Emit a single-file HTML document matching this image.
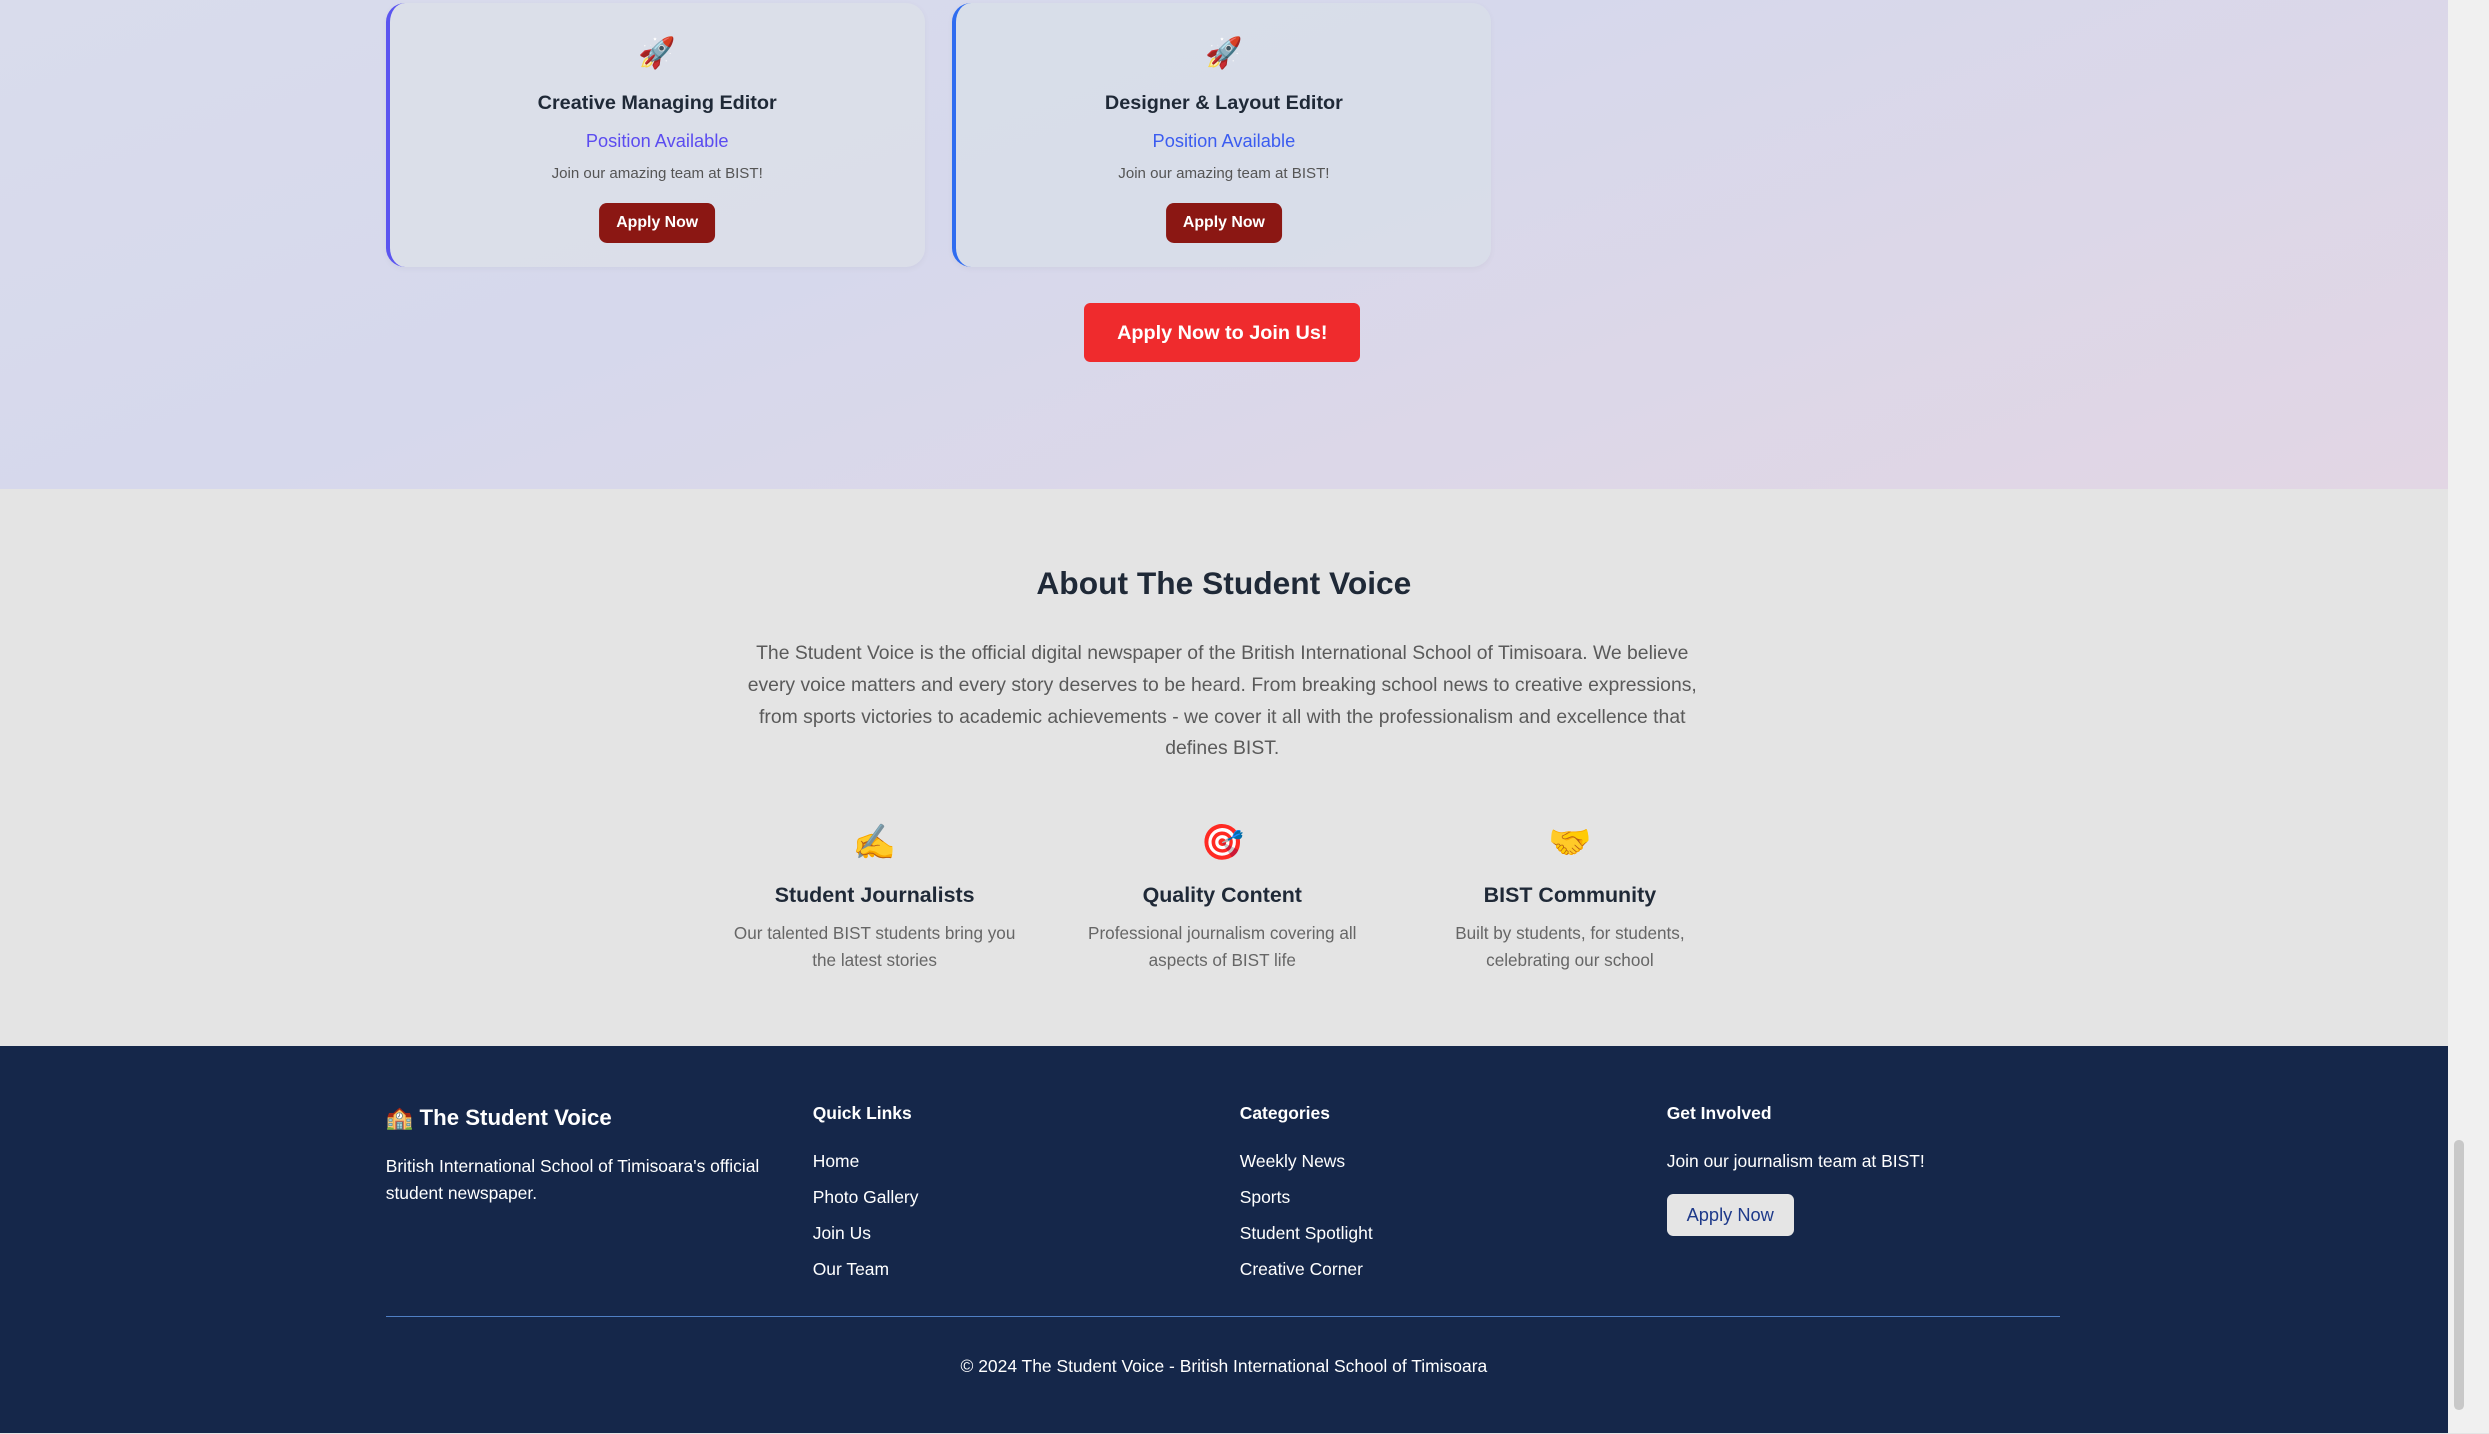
<!DOCTYPE html>
<html><head><meta charset="utf-8"><style>
html{zoom:1.58737;}
body{margin:0;width:1568px;height:903px;overflow:hidden;font-family:"Liberation Sans",sans-serif;position:relative;background:#e4e4e4;}
.main{position:absolute;left:0;top:0;width:1542px;height:903px;}
.top{position:absolute;left:0;top:0;width:1542px;height:308px;background:linear-gradient(160deg,#d9dcec 0%,#d6d8ec 40%,#e2d6e4 100%);}
.card{position:absolute;top:2px;width:337px;height:166px;background:rgba(220,224,232,.75);border-left:3px solid #5b55f0;border-radius:12px;text-align:center;box-shadow:0 1px 4px rgba(0,0,0,.04);}
.card .ic{position:absolute;top:20px;left:0;right:0;font-size:19px;line-height:24px;}
.card h3{position:absolute;top:56px;left:0;right:0;margin:0;font-size:12.5px;font-weight:bold;color:#1f2937;}
.card .pa{position:absolute;top:80px;left:0;right:0;font-size:11.5px;color:#5b4cf0;}
.card .j{position:absolute;top:102px;left:0;right:0;font-size:9.5px;color:#555;}
.card .b{position:absolute;top:126px;left:50%;transform:translateX(-50%);width:73px;height:25px;background:#8b1713;color:#fff;border-radius:5px;font-size:10px;font-weight:bold;line-height:25px;}
.big{position:absolute;left:683px;top:191px;width:174px;height:37px;background:#ef2b2d;color:#fff;border-radius:4px;font-size:12.5px;font-weight:bold;text-align:center;line-height:39px;}
h2{position:absolute;top:356px;left:0;width:1542px;text-align:center;margin:0;font-size:20px;color:#1f2937;font-weight:bold;}
.ab{position:absolute;top:402px;left:462px;width:616px;text-align:center;font-size:12.2px;line-height:20px;color:#5a5a5a;}
.f{position:absolute;top:516px;width:200px;text-align:center;}
.f .i{font-size:22px;line-height:30px;}
.f h4{margin:10px 0 8px;font-size:13.5px;color:#1f2937;}
.f p{margin:0;font-size:10.8px;line-height:17px;color:#666;}
.foot{position:absolute;left:0;top:659px;width:1542px;height:244px;background:#15274a;color:#fff;}
.foot .c{position:absolute;top:36px;font-size:11px;}
.foot h5{margin:0 0 12px;font-size:11px;font-weight:bold;}
.foot .l{line-height:22.7px;}
.scroll{position:absolute;left:1542px;top:0;width:26px;height:903px;background:#f0f0f0;}
</style></head><body>
<div class="main">
<div class="top">
<div class="card" style="left:243px"><div class="ic">🚀</div><h3>Creative Managing Editor</h3><div class="pa">Position Available</div><div class="j">Join our amazing team at BIST!</div><div class="b">Apply Now</div></div>
<div class="card" style="left:600px;border-left-color:#2f6cf0;background:rgba(216,222,232,.8)"><div class="ic">🚀</div><h3>Designer &amp; Layout Editor</h3><div class="pa" style="color:#3b5cf0">Position Available</div><div class="j">Join our amazing team at BIST!</div><div class="b">Apply Now</div></div>
<div class="big">Apply Now to Join Us!</div>
</div>
<h2>About The Student Voice</h2>
<div class="ab">The Student Voice is the official digital newspaper of the British International School of Timisoara. We believe every voice matters and every story deserves to be heard. From breaking school news to creative expressions, from sports victories to academic achievements - we cover it all with the professionalism and excellence that defines BIST.</div>
<div class="f" style="left:451px"><div class="i">✍️</div><h4>Student Journalists</h4><p>Our talented BIST students bring you<br>the latest stories</p></div>
<div class="f" style="left:670px"><div class="i">🎯</div><h4>Quality Content</h4><p>Professional journalism covering all<br>aspects of BIST life</p></div>
<div class="f" style="left:889px"><div class="i">🤝</div><h4>BIST Community</h4><p>Built by students, for students,<br>celebrating our school</p></div>
<div class="foot">
<div class="c" style="left:243px;width:250px"><div style="font-size:14px;font-weight:bold;margin-top:1px">🏫 The Student Voice</div><div style="margin-top:14px;line-height:17px">British International School of Timisoara's official student newspaper.</div></div>
<div class="c" style="left:512px"><h5>Quick Links</h5><div class="l">Home<br>Photo Gallery<br>Join Us<br>Our Team</div></div>
<div class="c" style="left:781px"><h5>Categories</h5><div class="l">Weekly News<br>Sports<br>Student Spotlight<br>Creative Corner</div></div>
<div class="c" style="left:1050px"><h5>Get Involved</h5><div class="l">Join our journalism team at BIST!</div><div style="margin-top:9px;width:80px;height:27px;background:#e5e5e5;color:#1e3a8a;border-radius:4px;text-align:center;line-height:27px;font-size:11.5px">Apply Now</div></div>
<div style="position:absolute;left:243px;top:170px;width:1055px;height:1px;background:#4f7fc4"></div>
<div style="position:absolute;top:195px;left:0;width:1542px;text-align:center;font-size:11px">© 2024 The Student Voice - British International School of Timisoara</div>
</div>
</div>
<div class="scroll"><div style="position:absolute;left:4px;top:718px;width:6px;height:170px;background:#c8c8c8;border-radius:3px"></div></div>
</body></html>
